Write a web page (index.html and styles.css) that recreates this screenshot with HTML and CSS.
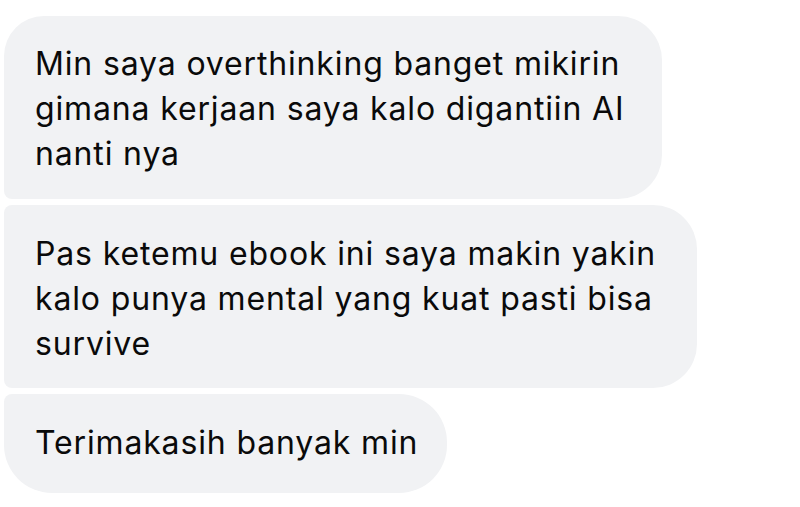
FILE: index.html
```html
<!DOCTYPE html>
<html lang="id">
<head>
<meta charset="utf-8">
<title>Chat</title>
<link rel="stylesheet" href="styles.css">
</head>
<body>
<div class="thread">
  <div class="bubble first b1">Min saya overthinking banget mikirin<br>gimana kerjaan saya kalo digantiin AI<br>nanti nya</div>
  <div class="bubble middle b2">Pas ketemu ebook ini saya makin yakin<br>kalo punya mental yang kuat pasti bisa<br>survive</div>
  <div class="bubble last b3">Terimakasih banyak min</div>
</div>
</body>
</html>
```
FILE: styles.css
```css
html, body {
  margin: 0;
  padding: 0;
  background: #ffffff;
}
.thread {
  display: flex;
  flex-direction: column;
  align-items: flex-start;
  gap: 6px;
  padding: 16px 0 0 4px;
}
.bubble {
  box-sizing: border-box;
  background: #f1f2f4;
  color: #0a0a0a;
  font-family: Inter, sans-serif;
  font-size: 32px;
  letter-spacing: 0.85px;
  line-height: 45px;
  padding: 25px 20px 26px 31px;
  white-space: nowrap;
}
.first { border-radius: 40px 44px 44px 8px; }
.middle { border-radius: 8px 44px 44px 8px; padding-top: 26px; }
.last { border-radius: 8px 48px 48px 48px; padding-top: 26px; }
.b1 { width: 658px; height: 183px; }
.b2 { width: 693px; height: 183px; }
.b3 { width: 443px; height: 99px; }
```
